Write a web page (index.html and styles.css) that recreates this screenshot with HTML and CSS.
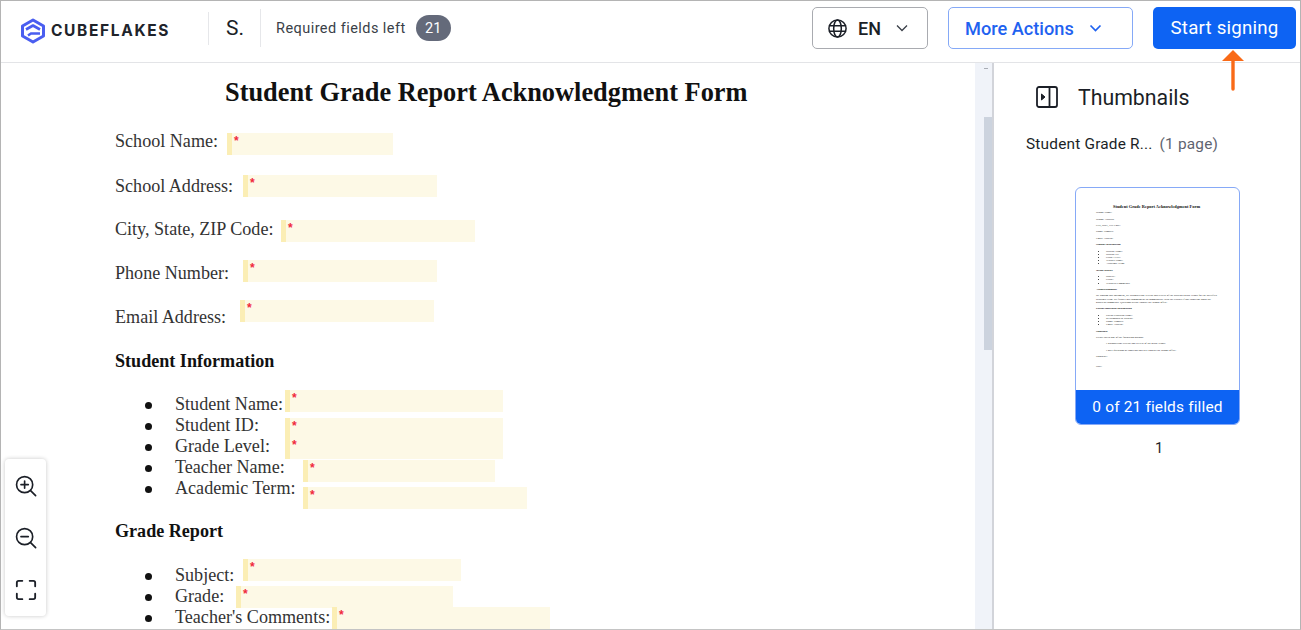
FILE: index.html
```html
<!DOCTYPE html>
<html lang="en">
<head>
<meta charset="utf-8">
<title>Student Grade Report Acknowledgment Form</title>
<link rel="stylesheet" href="styles.css">
</head>
<body>
<div class="frame">
  <header class="topbar">
    <div class="logo">
      <svg class="logo-mark" viewBox="0 0 26 26" width="26" height="26" fill="none">
        <path d="M13 2 23.5 8v10L13 24 2.5 18V8Z" stroke="#4a5ef0" stroke-width="3" stroke-linejoin="round"/>
        <path d="M6 11.5 13 7.5l7 4" stroke="#4a5ef0" stroke-width="2.6" stroke-linejoin="round"/>
        <path d="M20 15.5 11 15.5 8 17.5" stroke="#4a5ef0" stroke-width="2.6"/>
      </svg>
      <span class="logo-text">CUBEFLAKES</span>
    </div>
    <div class="sep sep-a"></div>
    <span class="initial">S.</span>
    <div class="sep sep-b"></div>
    <span class="req">Required fields left</span>
    <span class="badge">21</span>
    <div class="spacer"></div>
    <button class="btn lang">
      <svg viewBox="0 0 22 22" width="21" height="21" fill="none" stroke="#1b1f27" stroke-width="1.6">
        <circle cx="11" cy="11" r="9"/><ellipse cx="11" cy="11" rx="4" ry="9"/><path d="M2 8.2h18M2 13.8h18"/>
      </svg>
      <span class="lang-code">EN</span>
      <svg class="lang-chev" viewBox="0 0 12 8" width="12" height="8" fill="none" stroke="#3a3f48" stroke-width="1.3"><path d="M1 1.5 6 6.5l5-5"/></svg>
    </button>
    <button class="btn more">
      <span>More Actions</span>
      <svg viewBox="0 0 12 8" width="13" height="8" fill="none" stroke="#1f62f0" stroke-width="1.7"><path d="M1 1.5 6 6.5l5-5"/></svg>
    </button>
    <button class="btn start">Start signing</button>
  </header>
  <svg class="callout" viewBox="0 0 24 42" width="24" height="42">
    <path d="M12 10v29" stroke="#f96a17" stroke-width="3.4" stroke-linecap="round"/>
    <path d="M1 11 12 0l11 11Z" fill="#f96a17"/>
  </svg>

  <div class="body">
    <main class="viewer">
      <article class="page">
        <h1 class="doc-title">Student Grade Report Acknowledgment Form</h1>
        <p class="line l-school">School Name:</p>
        <p class="line l-address">School Address:</p>
        <p class="line l-city">City, State, ZIP Code:</p>
        <p class="line l-phone">Phone Number:</p>
        <p class="line l-email">Email Address:</p>
        <h2 class="sec s-student">Student Information</h2>
        <ul class="list u-student">
          <li>Student Name:</li>
          <li>Student ID:</li>
          <li>Grade Level:</li>
          <li>Teacher Name:</li>
          <li>Academic Term:</li>
        </ul>
        <h2 class="sec s-grade">Grade Report</h2>
        <ul class="list u-grade">
          <li>Subject:</li>
          <li>Grade:</li>
          <li>Teacher's Comments:</li>
        </ul>
        <div class="field f1">*</div>
        <div class="field f2">*</div>
        <div class="field f3">*</div>
        <div class="field f4">*</div>
        <div class="field f5">*</div>
        <div class="field f6">*</div>
        <div class="field f7">*</div>
        <div class="field f8">*</div>
        <div class="field f9">*</div>
        <div class="field f10">*</div>
        <div class="field f11">*</div>
        <div class="field f12">*</div>
        <div class="field f13">*</div>
      </article>
      <div class="zoombar">
        <svg viewBox="0 0 24 24" width="22" height="22" fill="none" stroke="#1b1f27" stroke-width="1.8" stroke-linecap="round"><circle cx="10.5" cy="10.5" r="8.8"/><path d="M17 17l5.5 5.5M10.5 6.5v8M6.5 10.5h8"/></svg>
        <svg viewBox="0 0 24 24" width="22" height="22" fill="none" stroke="#1b1f27" stroke-width="1.8" stroke-linecap="round"><circle cx="10.5" cy="10.5" r="8.8"/><path d="M17 17l5.5 5.5M6.5 10.5h8"/></svg>
        <svg viewBox="0 0 24 24" width="22" height="22" fill="none" stroke="#1b1f27" stroke-width="2" stroke-linecap="round"><path d="M2 8V4a2 2 0 0 1 2-2h4M16 2h4a2 2 0 0 1 2 2v4M22 16v4a2 2 0 0 1-2 2h-4M8 22H4a2 2 0 0 1-2-2v-4"/></svg>
      </div>
    </main>
    <div class="scrolltrack"><span class="scroll-up"></span><span class="scrollthumb"></span></div>
    <aside class="side">
      <div class="side-head">
        <svg viewBox="0 0 22 22" width="22" height="22" fill="none" stroke="#1b1f27" stroke-width="1.8" stroke-linejoin="round"><rect x="1" y="1" width="20" height="20" rx="2"/><path d="M13.5 1v20"/><path d="M5.5 8l3.5 3-3.5 3Z" fill="#1b1f27" stroke-width="1"/></svg>
        <span class="side-title">Thumbnails</span>
      </div>
      <div class="side-file"><span class="file-name">Student Grade R...</span><span class="file-pages">(1 page)</span></div>
      <div class="thumb">
        <div class="thumb-doc">
          <p class="t-title">Student Grade Report Acknowledgment Form</p>
          <p>School Name:</p><p>School Address:</p><p>City, State, ZIP Code:</p><p>Phone Number:</p><p>Email Address:</p>
          <p class="t-b">Student Information</p>
          <ul class="t-list"><li>Student Name:</li><li>Student ID:</li><li>Grade Level:</li><li>Teacher Name:</li><li>Academic Term:</li></ul>
          <p class="t-b">Grade Report</p>
          <ul class="t-list"><li>Subject:</li><li>Grade:</li><li>Teacher's Comments:</li></ul>
          <p class="t-b">Acknowledgment</p>
          <p class="t-para">By signing this document, we acknowledge receipt and review of the student's grade report for the specified academic term. We further our commitment to communicate with the teacher if any concerns about the grades or comments. Questions please contact the school office.</p>
          <p class="t-b">Parent/Guardian Information</p>
          <ul class="t-list"><li>Parent/Guardian Name:</li><li>Relationship to Student:</li><li>Phone Number:</li><li>Email Address:</li></ul>
          <p class="t-b">Signature</p>
          <p>Please check one of the following options:</p>
          <p class="t-in">I acknowledge receipt and review of the grade report.</p>
          <p class="t-in">I have questions or concerns and will contact the school office.</p>
          <p>Signature:</p>
          <p class="t-date">Date:</p>
        </div>
        <div class="thumb-foot">0 of 21 fields filled</div>
      </div>
      <div class="thumb-num">1</div>
    </aside>
  </div>
</div>
</body>
</html>
```

FILE: styles.css
```css
* { box-sizing: border-box; }
html, body { margin: 0; height: 100%; background: #fff; overflow: hidden; }
body { font-family: Roboto, "Liberation Sans", sans-serif; color: #1b1f27; }
.frame {
  position: relative;
  width: 1301px; height: 630px;
  border: 1px solid #b4b4b4;
  border-bottom-color: #c4c4c4;
  display: flex; flex-direction: column;
  overflow: hidden;
}
.topbar {
  height: 62px; flex: none;
  display: flex; align-items: center;
  border-bottom: 1px solid #e3e4e7;
  padding: 0 4px 7px 19px;
}
.logo { display: flex; align-items: center; gap: 5px; width: 188px; margin-top: 5px; }
.logo-mark { flex: none; }
.logo-text { font: 700 15.5px Inter, sans-serif; letter-spacing: 1.65px; color: #20232a; }
.sep { width: 1px; background: #e6e7ea; flex: none; }
.sep-a { height: 33px; }
.sep-b { height: 38px; }
.initial { font-size: 21px; width: 51px; padding-left: 17px; color: #1b1f27; }
.req { font-size: 14.5px; margin-left: 15px; letter-spacing: .45px; color: #3a3f48; }
.badge {
  margin-left: 10px; width: 35px; height: 26px; border-radius: 13px;
  background: #646a7a; color: #fff; font-size: 14.5px;
  display: flex; align-items: center; justify-content: center;
}
.spacer { flex: 1; }
.btn {
  height: 42px; border-radius: 5px; font-family: Roboto, sans-serif;
  display: flex; align-items: center; background: #fff; padding: 0;
  flex: none;
}
.lang { width: 116px; border: 1px solid #a9abb0; padding-left: 14px; font-size: 18px; font-weight: 500; color: #1b1f27; }
.lang-code { margin-left: 10px; }
.lang-chev { margin-left: 15px; }
.more { width: 185px; margin-left: 20px; border: 1px solid #85a9f7; color: #1f62f0; font-size: 18.2px; font-weight: 500; padding-left: 16px; gap: 15px; }
.start { width: 143px; margin-left: 20px; border: 0; background: #0d63f3; color: #fff; font-size: 18.7px; justify-content: center; letter-spacing: .2px; }
.callout { position: absolute; left: 1220px; top: 49px; z-index: 3; }

.body { flex: 1; display: flex; min-height: 0; }
.viewer { position: relative; width: 974px; flex: none; overflow: hidden; }
.scrolltrack { position: relative; width: 19px; flex: none; background: #f0f3f9; border-right: 2px solid #d2d4da; }
.scroll-up { position: absolute; left: 9px; top: 5px; width: 4px; height: 1px; background: #a9adb5; }
.scrollthumb { position: absolute; left: 9px; top: 54px; width: 8px; height: 233px; background: #ccd3de; }

.page { position: relative; height: 100%; font-family: "Liberation Serif", serif; color: #333; font-size: 18.1px; }
.doc-title { position: absolute; left: 224px; top: 14px; margin: 0; font-size: 26.35px; font-weight: 700; line-height: 32px; color: #111; white-space: nowrap; }
.line { position: absolute; left: 114px; margin: 0; line-height: 22px; white-space: nowrap; }
.l-school { top: 67px; } .l-address { top: 112px; } .l-city { top: 155px; } .l-phone { top: 199px; } .l-email { top: 243px; }
.sec { position: absolute; left: 114px; margin: 0; font-size: 18.1px; font-weight: 700; line-height: 22px; color: #111; white-space: nowrap; }
.s-student { top: 287px; } .s-grade { top: 457px; }
.list { position: absolute; left: 174px; margin: 0; padding: 0; list-style: none; line-height: 21px; }
.list li { position: relative; white-space: nowrap; }
.list li::before { content: ""; position: absolute; left: -30px; top: 8px; width: 7px; height: 7px; border-radius: 50%; background: #111; }
.u-student { top: 331px; } .u-grade { top: 502px; }
.field {
  position: absolute; height: 21.5px; background: #fdf9e6;
  border-left: 5px solid #fbeeb5; color: #f0283c;
  font: 700 12px/17px "Liberation Sans", sans-serif; padding-left: 2px;
}
.f1 { left: 226px; top: 70px; width: 166px; }
.f2 { left: 242px; top: 112px; width: 194px; }
.f3 { left: 280px; top: 157px; width: 194px; }
.f4 { left: 242px; top: 197px; width: 194px; }
.f5 { left: 239px; top: 237px; width: 194px; }
.f6 { left: 284px; top: 327px; width: 218px; }
.f7 { left: 284px; top: 355px; width: 218px; }
.f8 { left: 284px; top: 374px; width: 218px; }
.f9 { left: 302px; top: 397px; width: 192px; }
.f10 { left: 302px; top: 424px; width: 224px; }
.f11 { left: 242px; top: 496px; width: 218px; }
.f12 { left: 235px; top: 523px; width: 217px; }
.f13 { left: 331px; top: 544px; width: 218px; }

.zoombar {
  position: absolute; left: 4px; top: 396px; width: 41px; height: 157px;
  background: #fff; border-radius: 4px; box-shadow: 0 0 4px rgba(0,0,0,.22);
  display: flex; flex-direction: column; align-items: center; gap: 30px;
  padding: 16px 0 0;
}

.side { flex: 1; min-width: 0; position: relative; }
.side-head { display: flex; align-items: center; margin: 23px 0 0 42px; height: 22px; }
.side-title { font-size: 21.3px; margin-left: 20px; color: #1b1f27; }
.side-file { margin: 27px 0 0 32px; font-size: 15.4px; display: flex; gap: 7px; letter-spacing: .2px; }
.file-name { color: #1b1f27; }
.file-pages { color: #5f6470; }
.thumb {
  margin: 34px 0 0 81px; width: 165px; height: 238px;
  border: 1px solid #86a9f7; border-radius: 6px; overflow: hidden;
  display: flex; flex-direction: column; background: #fff;
}
.thumb-doc { flex: 1; padding: 17px 0 0 20px; font: 2.8px/3.2px "Liberation Serif", serif; color: #111; overflow: hidden; }
.thumb-doc p { margin: 0 0 3.2px; }
.thumb-doc .t-title { font-size: 4.4px; font-weight: 700; color: #111; margin: 0 0 3px 17px; white-space: nowrap; }
.thumb-doc .t-b { font-weight: 700; color: #111; }
.t-list { margin: 0 0 3.2px; padding: 0 0 0 10px; }
.thumb-doc .t-para { width: 122px; }
.thumb-doc .t-in { margin-left: 10px; }
.thumb-doc .t-date { margin-top: 7px; }
.thumb-foot { height: 34px; flex: none; background: #0d63f3; color: #fff; font-size: 15.5px; display: flex; align-items: center; justify-content: center; letter-spacing: .15px; }
.thumb-num { margin: 15px 0 0 161px; font-size: 14.5px; color: #1b1f27; }
```
